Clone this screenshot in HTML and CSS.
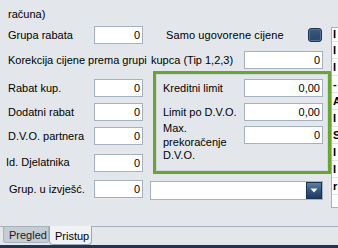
FILE: index.html
```html
<!DOCTYPE html>
<html>
<head>
<meta charset="utf-8">
<link rel="stylesheet" href="styles.css">
</head>
<body>
<div class="screen">
  <div class="main">
    <div class="form">
      <div class="title">računa)</div>
      <div class="row r-grupa">
        <span class="lbl">Grupa rabata</span>
        <div class="field num">0</div>
        <span class="lbl-samo">Samo ugovorene cijene</span>
        <span class="check"></span>
      </div>
      <div class="row r-korek">
        <span class="lbl-long">Korekcija cijene prema grupi</span>
        <span>kupca (Tip 1,2,3)</span>
        <div class="field wide">0</div>
      </div>
      <div class="mid">
        <div class="leftcol">
          <div class="row"><span class="lbl">Rabat kup.</span><div class="field num">0</div></div>
          <div class="row gap6"><span class="lbl">Dodatni rabat</span><div class="field num">0</div></div>
          <div class="row gap6"><span class="lbl">D.V.O. partnera</span><div class="field num">0</div></div>
          <div class="row gap9 r-id"><span class="lbl lbl-id">Id. Djelatnika</span><div class="field num">0</div></div>
        </div>
        <div class="frame">
          <div class="frow"><span class="flbl">Kreditni limit</span><div class="field wide">0,00</div></div>
          <div class="frow gap6"><span class="flbl">Limit po D.V.O.</span><div class="field wide">0,00</div></div>
          <div class="frow frow-max"><span class="flbl flbl-multi">Max.<br>prekoračenje<br>D.V.O.</span><div class="field wide">0</div></div>
        </div>
      </div>
      <div class="row r-grup">
        <span class="lbl lbl-grup">Grup. u izvješć.</span>
        <div class="field num">0</div>
        <div class="combo">
          <span class="combo-btn">
            <svg width="8" height="5" viewBox="0 0 8 5"><polygon points="0.5,0.5 7.5,0.5 4,4.5" fill="#ffffff"/></svg>
          </span>
        </div>
      </div>
    </div>
    <div class="list">
      <div class="lrow first">I</div>
      <div class="lrow">I</div>
      <div class="lrow">I</div>
      <div class="lrow">-</div>
      <div class="lrow">A</div>
      <div class="lrow">I</div>
      <div class="lrow">S</div>
      <div class="lrow">I</div>
      <div class="lrow">I</div>
      <div class="lrow">r</div>
      <div class="lrow"></div>
    </div>
  </div>
  <div class="tabs">
    <div class="tab inactive">Pregled</div>
    <div class="tab active">Pristup</div>
  </div>
  <div class="statusbar"></div>
</div>
</body>
</html>
```
FILE: styles.css
```css
html, body {
  margin: 0;
  padding: 0;
}

body {
  font-family: "Liberation Sans", Arial, sans-serif;
  font-size: 11px;
  color: #000;
  background: #e3e7eb;
}

.screen {
  width: 338px;
  height: 248px;
  overflow: hidden;
  background: #e3e7eb;
}

.main {
  display: flex;
  height: 226px;
}

.form {
  width: 331px;
  flex: none;
}

.title {
  margin-top: 5px;
  padding-left: 8px;
  height: 18px;
  line-height: 18px;
}

.row {
  display: flex;
  align-items: center;
  height: 18px;
  line-height: 18px;
  white-space: nowrap;
}

.lbl {
  width: 94px;
  padding-left: 8px;
  box-sizing: border-box;
  flex: none;
}

.field {
  box-sizing: border-box;
  height: 18px;
  line-height: 16px;
  border: 1px solid #a6b1bf;
  background: #ffffff;
  text-align: right;
  padding-right: 2px;
  flex: none;
}

.field.num {
  width: 49px;
}

.field.wide {
  width: 79px;
  margin-left: auto;
  margin-right: 8px;
}

.r-grupa {
  margin-top: 3px;
}

.lbl-samo {
  margin-left: 23px;
  letter-spacing: 0.1px;
}

.check {
  margin-left: auto;
  margin-right: 9px;
  width: 14px;
  height: 14px;
  box-sizing: border-box;
  border: 1px solid #1c3453;
  border-radius: 3px;
  background: linear-gradient(#3a5a80, #2a4668);
  box-shadow: inset 0 0 0 1px #58739a;
}

.r-korek {
  margin-top: 7px;
}

.lbl-long {
  width: 151px;
  padding-left: 8px;
  box-sizing: border-box;
  flex: none;
}

.mid {
  display: flex;
  margin-top: 2px;
  height: 103px;
}

.leftcol {
  width: 153px;
  flex: none;
  padding-top: 8px;
  box-sizing: border-box;
}

.gap6 {
  margin-top: 6px;
}

.gap9 {
  margin-top: 9px;
}

.r-id {
  align-items: flex-start;
}

.lbl-id {
  padding-left: 6px;
  line-height: 16px;
}

.frame {
  width: 178px;
  height: 103px;
  box-sizing: border-box;
  border: 3px solid #68a532;
  padding: 5px 5px 0 7px;
  box-shadow: inset 0 0 0 1px #d2d7dd;
}

.frow {
  display: flex;
  align-items: center;
  height: 18px;
  line-height: 18px;
  white-space: nowrap;
}

.frame .field.wide {
  margin-right: 0;
}

.flbl {
  width: 81px;
  flex: none;
}

.frow-max {
  margin-top: 5px;
  align-items: flex-start;
}

.flbl-multi {
  line-height: 13.5px;
  margin-top: -4px;
}

.r-grup {
  margin-top: 6px;
  align-items: flex-start;
}

.lbl-grup {
  padding-left: 9px;
}

.combo {
  margin-left: 7px;
  margin-top: 1px;
  width: 173px;
  height: 19px;
  box-sizing: border-box;
  border: 1px solid #a6b1bf;
  background: #ffffff;
  display: flex;
  justify-content: flex-end;
}

.combo-btn {
  width: 16px;
  height: 17px;
  box-sizing: border-box;
  border: 1px solid #1a3150;
  background: linear-gradient(#5f7fa6, #3a5a82 45%, #1f3b60);
  display: flex;
  align-items: center;
  justify-content: center;
}

.combo-btn svg {
  display: block;
}

.list {
  flex: 1;
  margin-top: 27px;
  height: 181px;
  box-sizing: border-box;
  border: 1px solid #a6b1bf;
  border-right: none;
  background: #ffffff;
  overflow: hidden;
}

.lrow {
  height: 17px;
  line-height: 16px;
  box-sizing: border-box;
  border-bottom: 1px solid #e0e3e7;
  padding-left: 1px;
  white-space: nowrap;
  overflow: hidden;
  font-weight: bold;
}

.lrow.first {
  height: 14px;
  line-height: 12px;
}

.tabs {
  display: flex;
  height: 19px;
  box-sizing: border-box;
  border-top: 1px solid #a7b0bd;
  padding-left: 3px;
}

.tab {
  box-sizing: border-box;
  padding-left: 5px;
  line-height: 16px;
  white-space: nowrap;
}

.tab.inactive {
  width: 46px;
  height: 16px;
  background: #c6ccd4;
  border: 1px solid #aab2be;
  border-top: none;
  border-radius: 0 0 3px 3px;
  color: #1a1a1a;
}

.tab.active {
  width: 43px;
  height: 19px;
  margin-top: -1px;
  padding-top: 2px;
  background: #f0f2f5;
  border: 1px solid #9ca6b4;
  border-top: none;
  border-radius: 0 0 4px 4px;
}

.statusbar {
  height: 3px;
  background: #203450;
}
```
